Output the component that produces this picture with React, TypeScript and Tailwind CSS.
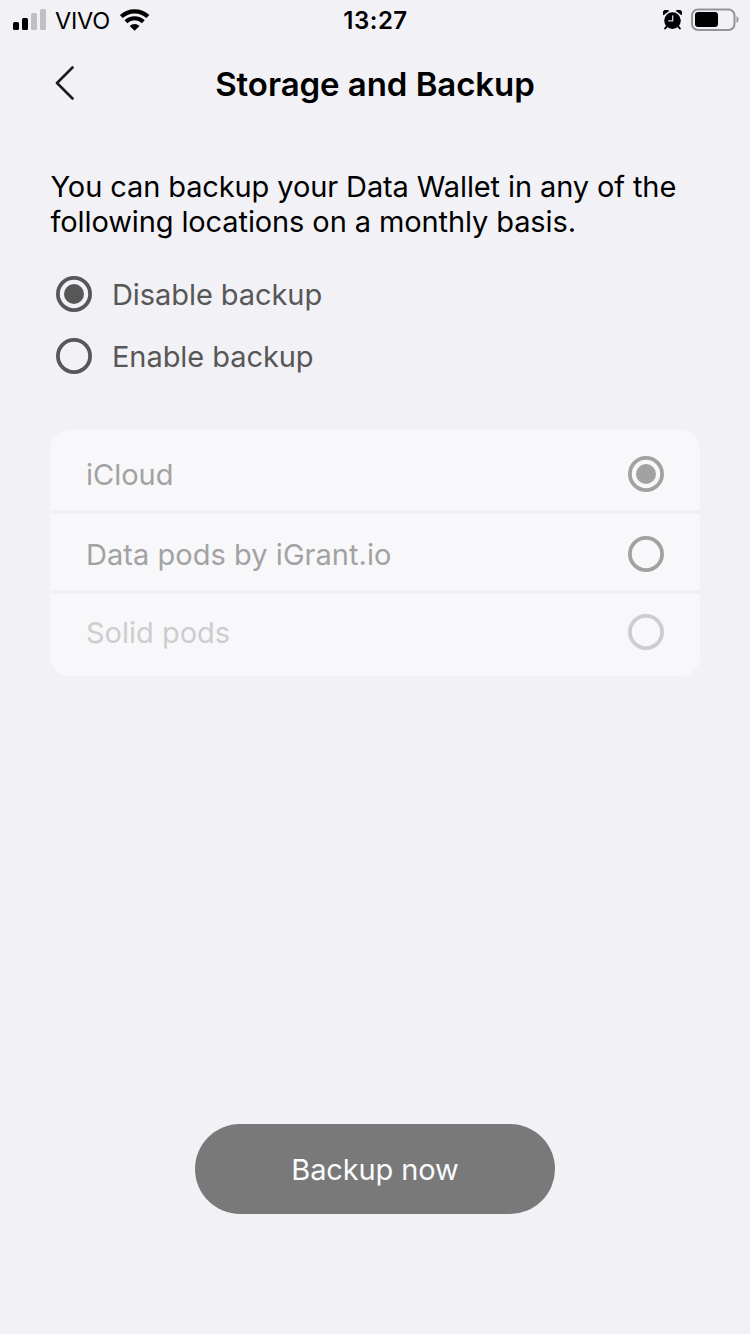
import { useState } from "react";

function Radio({ checked, className }: { checked: boolean; className: string }) {
  return (
    <svg width="36" height="36" viewBox="0 0 36 36" className={`shrink-0 ${className}`}>
      <circle cx="18" cy="18" r="16.1" fill="none" stroke="currentColor" strokeWidth="3.8" />
      {checked && <circle cx="18" cy="18" r="10" fill="currentColor" />}
    </svg>
  );
}

function StatusBar() {
  return (
    <div className="grid h-10 grid-cols-3 items-center pl-[13px] pr-[11px]">
      <div className="flex items-center">
        <svg width="33" height="22" viewBox="0 0 33 22">
          <rect x="0" y="13" width="6" height="8" rx="1.6" />
          <rect x="9" y="9" width="6" height="12" rx="1.6" />
          <rect x="18" y="4" width="6" height="17" rx="1.6" fill="#c0bfc5" />
          <rect x="27" y="0" width="6" height="21" rx="1.6" fill="#c0bfc5" />
        </svg>
        <span className="ml-[9px] w-[56px] whitespace-nowrap pt-0.5 text-[23.5px] leading-[38px] tracking-[-0.2px]">VIVO</span>
        <svg width="30" height="22" viewBox="0 0 30 22" className="ml-[9px]" fill="none" stroke="#000">
          <path d="M1.3 7.6a19.3 19.3 0 0 1 26.600 0" strokeWidth="4.2" />
          <path d="M5.900 12.7a12.4 12.4 0 0 1 17.400 0" strokeWidth="4" />
          <path d="M14.600 21.8l-4.9-4.9a7 7 0 0 1 9.8 0z" fill="#000" stroke="none" />
        </svg>
      </div>
      <div className="pt-0.5 pr-px text-center text-[24px] font-semibold leading-[38px] tracking-[0.5px]">13:27</div>
      <div className="flex items-center justify-end">
        <svg width="19" height="20" viewBox="0 0 19 20" className="mr-px">
          <circle cx="9.5" cy="10.6" r="8.3" />
          <path d="M.5 5.2A3.2 3.2 0 0 1 6.2 1zM18.5 5.2A3.2 3.2 0 0 0 12.8 1z" />
          <path d="M3.8 16.3l-1.7 2.2M15.2 16.3l1.7 2.2" stroke="#000" strokeWidth="2" strokeLinecap="round" />
          <path d="M9.7 5.8v5.1H5.8" fill="none" stroke="#d8d8dc" strokeWidth="1.3" strokeLinecap="round" />
        </svg>
        <svg width="48" height="24" viewBox="0 0 48 24" className="ml-[8px]">
          <rect x="1" y="1.5" width="42.5" height="20.5" rx="6" fill="none" stroke="#949398" strokeWidth="2" />
          <rect x="4" y="4" width="23" height="15" rx="3.2" />
          <path d="M45.5 8c1.5.8 2 2 2 3.5s-.5 2.7-2 3.5z" fill="#949398" />
        </svg>
      </div>
    </div>
  );
}

const locations = [
  { name: "iCloud", row: "h-[84px] pt-2 border-b-4", text: "text-[#a2a2a3]", label: "pt-0.5" },
  { name: "Data pods by iGrant.io", row: "h-[80px] pt-1 border-b-4", text: "text-[#a2a2a3]", label: "pt-0.5 tracking-[0.04px]" },
  { name: "Solid pods", row: "h-[82px] pb-[6px]", text: "text-[#cdcdcf]", label: "pt-0.5" },
];

export default function App() {
  const [enabled, setEnabled] = useState(false);
  return (
    <div className="flex h-[1334px] w-[750px] flex-col bg-[#f2f1f6] font-['Inter',sans-serif] text-black">
      <StatusBar />
      <header className="grid h-[88px] grid-cols-[1fr_auto_1fr] items-center px-[50px]">
        <button className="mb-0.5 ml-[5px] w-5" aria-label="Back">
          <svg width="20" height="34" viewBox="0 0 20 34" fill="none" stroke="#1b1b1d" strokeWidth="2.6" strokeLinecap="round" strokeLinejoin="round">
            <path d="M17.5 1.5L2 17l15.5 15.5" />
          </svg>
        </button>
        <h1 className="text-[33px] font-semibold leading-10 tracking-[-0.06px]">Storage and Backup</h1>
      </header>

      <main className="flex flex-1 flex-col px-[50px] pt-[41px]">
        <p className="whitespace-nowrap pl-[0.5px] text-[29px] leading-[35px] tracking-[-0.11px]">
          <span className="block">You can backup your Data Wallet in any of the</span>
          <span className="block">following locations on a monthly basis.</span>
        </p>

        <div className="mt-[24px] flex flex-col pl-[6px] text-[29px] tracking-[-0.07px] text-[#575758]">
          <button className="flex h-[62px] items-center gap-5" onClick={() => setEnabled(false)}>
            <Radio checked={!enabled} className="text-[#575758]" />
            <span className="pt-px">Disable backup</span>
          </button>
          <button className="flex h-[62px] items-center gap-5" onClick={() => setEnabled(true)}>
            <Radio checked={enabled} className="text-[#575758]" />
            <span className="pt-px">Enable backup</span>
          </button>
        </div>

        <ul className="mt-[43px] h-[246px] overflow-hidden rounded-[20px] bg-[#f8f8fa] text-[29px]">
          {locations.map((l, i) => (
            <li key={l.name} className={`flex items-center justify-between border-[#f1f1f4] pl-9 pr-9 ${l.row} ${l.text}`}>
              <span className={l.label}>{l.name}</span>
              <Radio checked={i === 0} className={l.text} />
            </li>
          ))}
        </ul>

        <button className="mb-[120px] mt-auto h-[90px] w-[360px] self-center rounded-full bg-[#79797a] pt-0.5 text-[29px] tracking-[-0.12px] text-[#fbfbfc]">
          Backup now
        </button>
      </main>
    </div>
  );
}
